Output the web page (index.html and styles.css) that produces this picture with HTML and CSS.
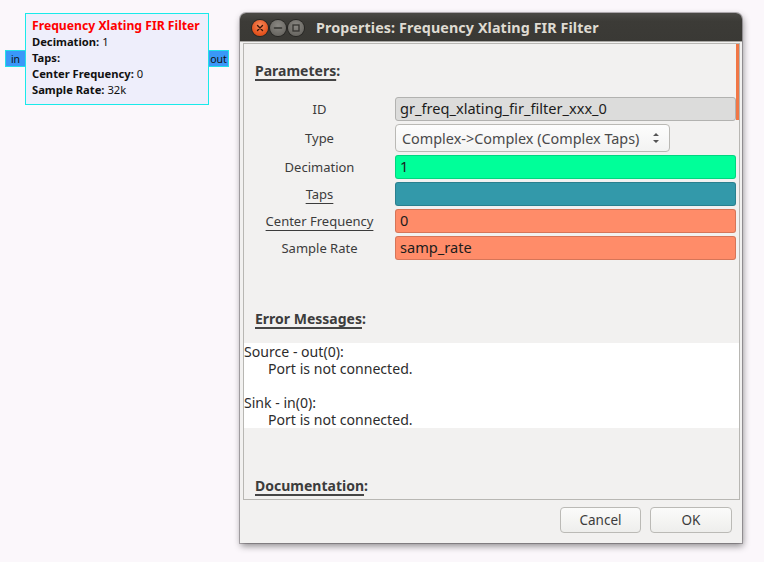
FILE: index.html
```html
<!DOCTYPE html>
<html>
<head>
<meta charset="utf-8">
<link rel="stylesheet" href="styles.css">
</head>
<body>
<div class="canvas">
  <div class="block">
    <div class="block-title">Frequency Xlating FIR Filter</div>
    <div class="block-line"><b>Decimation:</b> 1</div>
    <div class="block-line"><b>Taps:</b></div>
    <div class="block-line"><b>Center Frequency:</b> 0</div>
    <div class="block-line"><b>Sample Rate:</b> 32k</div>
  </div>
  <div class="port port-in">in</div>
  <div class="port port-out">out</div>

  <div class="dialog">
    <div class="titlebar">
      <div class="wbtns">
        <span class="wbtn wclose"><svg width="16" height="16" viewBox="0 0 16 16"><path d="M5.5 5.5 L10.5 10.5 M10.5 5.5 L5.5 10.5" stroke="#3a1508" stroke-width="1.4" stroke-linecap="round"/></svg></span>
        <span class="wbtn wgray"><svg width="16" height="16" viewBox="0 0 16 16"><path d="M4.5 8 H11.5" stroke="#353430" stroke-width="1.6" stroke-linecap="round"/></svg></span>
        <span class="wbtn wgray"><svg width="16" height="16" viewBox="0 0 16 16"><rect x="5" y="5" width="6" height="6" fill="none" stroke="#353430" stroke-width="1.3"/></svg></span>
      </div>
      <div class="title">Properties: Frequency Xlating FIR Filter</div>
    </div>
    <div class="dbody">
      <div class="frame">
        <div class="scroll-ind"></div>
        <div class="section-h h-params"><span class="ul">Parameters</span>:</div>
        <div class="params">
          <div class="plabel">ID</div>
          <div class="entry e-id">gr_freq_xlating_fir_filter_xxx_0</div>
          <div class="plabel">Type</div>
          <div class="pcombo-cell">
            <div class="combo">
              <span class="combo-text">Complex-&gt;Complex (Complex Taps)</span>
              <svg class="combo-arr" width="8" height="14" viewBox="0 0 8 14"><path d="M1 5 L4 2 L7 5 Z M1 9 L4 12 L7 9 Z" fill="#555"/></svg>
            </div>
          </div>
          <div class="plabel">Decimation</div>
          <div class="entry e-int">1</div>
          <div class="plabel"><span class="lul">Taps</span></div>
          <div class="entry e-cvec"></div>
          <div class="plabel"><span class="lul">Center Frequency</span></div>
          <div class="entry e-float">0</div>
          <div class="plabel">Sample Rate</div>
          <div class="entry e-float">samp_rate</div>
        </div>
        <div class="section-h h-err"><span class="ul">Error Messages</span>:</div>
        <div class="errors">
          <div>Source - out(0):</div>
          <div class="ind">Port is not connected.</div>
          <div>&nbsp;</div>
          <div>Sink - in(0):</div>
          <div class="ind">Port is not connected.</div>
        </div>
        <div class="section-h h-doc"><span class="ul">Documentation</span>:</div>
      </div>
      <div class="buttons">
        <button class="btn btn-cancel">Cancel</button>
        <button class="btn btn-ok">OK</button>
      </div>
    </div>
  </div>
</div>
</body>
</html>
```

FILE: styles.css
```css
html, body {
  margin: 0;
  padding: 0;
}
body {
  background: #fbf7fb;
  width: 764px;
  height: 562px;
  overflow: hidden;
  font-family: "Noto Sans", "DejaVu Sans", sans-serif;
}
.canvas {
  position: relative;
  width: 764px;
  height: 562px;
}

/* flowgraph block */
.block {
  position: absolute;
  left: 25px;
  top: 13px;
  border: 1px solid #19eaea;
  background: #eeeefb;
  padding: 4px 0 0 6px;
  box-sizing: content-box;
  width: 176px;
  height: 86px;
  font-size: 11.2px;
  color: #111;
}
.block-title {
  color: #f00;
  font-weight: bold;
  font-size: 12.2px;
  line-height: 16px;
}
.block-line {
  line-height: 16px;
}
.block-line b {
  font-weight: bold;
}
.port {
  position: absolute;
  top: 50px;
  height: 17px;
  line-height: 16px;
  background: #3a98f8;
  border: 1px solid #22e0e8;
  box-sizing: border-box;
  font-size: 10.5px;
  color: #111;
  text-align: center;
}
.port-in { left: 5px; width: 21px; }
.port-out { left: 208px; width: 21px; }

/* dialog window */
.dialog {
  position: absolute;
  left: 240px;
  top: 13px;
  width: 502px;
  height: 530px;
  background: #f2f1f0;
  border-radius: 6px 6px 0 0;
  box-shadow: 0 0 0 1px rgba(60, 55, 60, 0.35), 1px 3px 7px rgba(0, 0, 0, 0.45);
  display: flex;
  flex-direction: column;
}
.titlebar {
  height: 29px;
  flex: none;
  background: linear-gradient(#4a4945, #3c3b37 30%, #3a3935);
  border-radius: 6px 6px 0 0;
  display: flex;
  align-items: center;
  border-bottom: 1px solid #a9a8a4;
  box-sizing: border-box;
}
.wbtns {
  display: flex;
  gap: 2px;
  padding-left: 12px;
  padding-top: 2px;
}
.wbtn {
  width: 16px;
  height: 16px;
  border-radius: 50%;
  display: block;
}
.wbtn svg { display: block; }
.wclose {
  background: radial-gradient(circle at 50% 35%, #f88a5c, #e5541f 65%, #c9440f);
  box-shadow: 0 0 0 1px rgba(0,0,0,0.35);
}
.wgray {
  background: radial-gradient(circle at 50% 35%, #8a8883, #6d6b66 65%, #5d5b57);
  box-shadow: 0 0 0 1px rgba(0,0,0,0.35);
}
.title {
  margin-left: 12px;
  color: #dfdbd2;
  font-weight: bold;
  font-size: 14.3px;
  letter-spacing: 0.1px;
  padding-top: 1px;
}

.dbody {
  flex: 1;
  display: flex;
  flex-direction: column;
  padding: 1px 2px 0 3px;
}
.frame {
  position: relative;
  height: 457px;
  border: 1px solid #b8b7b3;
  box-sizing: border-box;
  overflow: hidden;
  display: flex;
  flex-direction: column;
  font-size: 13px;
  color: #3c3c3c;
}
.scroll-ind {
  position: absolute;
  right: 0;
  top: 0;
  width: 3px;
  height: 76px;
  background: #f07746;
}
.section-h {
  font-weight: bold;
  font-size: 14px;
  line-height: 20px;
  padding-left: 11px;
  color: #3c3c3c;
}
.section-h .ul {
  text-decoration: underline;
  text-decoration-thickness: 2px;
  text-underline-offset: 3px;
  text-decoration-color: #454545;
}
.h-params { margin-top: 17px; }
.h-err { margin-top: 49px; }
.h-doc { margin-top: 48px; }

.params {
  margin-top: 16px;
  display: grid;
  grid-template-columns: 151px 341px;
  grid-template-rows: 24px 28px 24px 24px 24px 24px;
  row-gap: 3px;
  align-items: center;
}
.plabel {
  text-align: center;
  font-size: 13px;
  color: #3c3c3c;
}
.lul {
  text-decoration: underline;
  text-underline-offset: 4px;
  text-decoration-thickness: 1px;
}
.entry {
  height: 24px;
  box-sizing: border-box;
  border: 1px solid rgba(0, 0, 0, 0.16);
  border-radius: 3px;
  padding-left: 4px;
  font-size: 14.6px;
  line-height: 21px;
  color: #1c1c1c;
}
.e-id { background: #dcdcdb; border-color: #b2b2b0; }
.e-int { background: #00ff99; }
.e-cvec { background: #3399aa; }
.e-float { background: #ff8c69; }

.pcombo-cell { height: 28px; }
.combo {
  width: 275px;
  height: 28px;
  box-sizing: border-box;
  border: 1px solid #bab9b5;
  border-radius: 4px;
  background: linear-gradient(#fdfdfd, #f3f3f2);
  display: flex;
  align-items: center;
  padding-left: 6px;
  padding-right: 9px;
  font-size: 14.4px;
  color: #4a4a4a;
}
.combo-text { flex: 1; }
.combo-arr { display: block; }

.errors {
  margin-top: 14px;
  background: #ffffff;
  font-size: 14.1px;
  line-height: 17px;
  color: #2c2c2c;
  height: 85px;
}
.errors .ind { padding-left: 24px; }

.buttons {
  display: flex;
  justify-content: flex-end;
  gap: 9px;
  margin-top: 7px;
  padding-right: 8px;
}
.btn {
  height: 26px;
  box-sizing: border-box;
  border: 1px solid #bbbab6;
  border-radius: 4px;
  background: linear-gradient(#fbfbfa, #eeeeec);
  font-family: "Noto Sans", "DejaVu Sans", sans-serif;
  font-size: 13.5px;
  color: #3c3c3c;
  padding: 0;
}
.btn-cancel { width: 81px; }
.btn-ok { width: 82px; }
```
